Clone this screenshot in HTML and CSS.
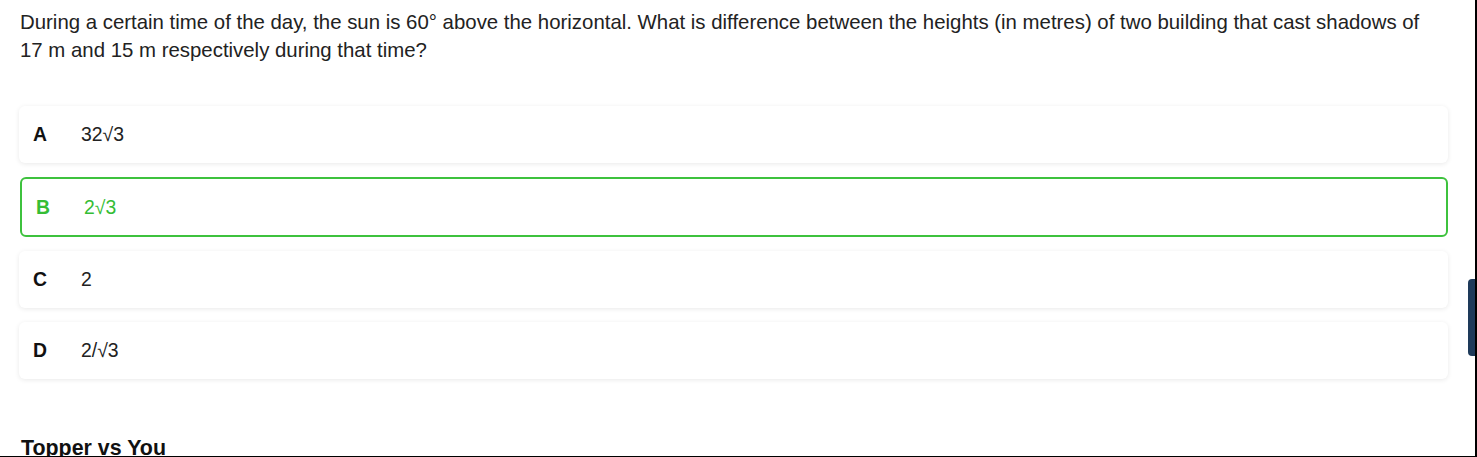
FILE: index.html
```html
<!DOCTYPE html>
<html lang="en">
<head>
    <meta charset="UTF-8">
    <meta name="viewport" content="width=device-width, initial-scale=1.0">
    <title>Question</title>
    <link rel="stylesheet" href="styles.css">
</head>
<body>
    <div class="page">
        <p class="question">During a certain time of the day, the sun is 60&deg; above the horizontal. What is difference between the heights (in metres) of two building that cast shadows of 17 m and 15 m respectively during that time?</p>

        <!-- Options -->
        <div class="options">
            <div class="option">
                <span class="letter">A</span>
                <span class="value">32&radic;3</span>
            </div>
            <div class="option correct">
                <span class="letter">B</span>
                <span class="value">2&radic;3</span>
            </div>
            <div class="option">
                <span class="letter">C</span>
                <span class="value">2</span>
            </div>
            <div class="option">
                <span class="letter">D</span>
                <span class="value">2/&radic;3</span>
            </div>
        </div>

        <h3 class="section-title">Topper vs You</h3>
    </div>

    <div class="side-tab"></div>
</body>
</html>
```

FILE: styles.css
```css
html, body {
    margin: 0;
    padding: 0;
    height: 100%;
    overflow: hidden;
}

body {
    font-family: 'Liberation Sans', Arial, sans-serif;
    color: #222;
    background-color: #ffffff;
}

.page {
    box-sizing: border-box;
    height: 457px;
    padding: 8px 27px 0 19px;
    border-right: 2px solid #000;
    border-bottom: 1px solid #000;
    overflow: hidden;
}

/* Question text */
.question {
    margin: 0 0 0 1px;
    font-size: 20.4px;
    line-height: 28px;
    padding-right: 10px;
}

/* Options */
.options {
    display: flex;
    flex-direction: column;
    gap: 14px;
    margin-top: 42px;
}

.option {
    display: flex;
    align-items: center;
    height: 57px;
    padding: 0 14px;
    border-radius: 6px;
    background-color: #fff;
    box-shadow: 0 1px 5px rgba(0, 0, 0, 0.09);
    font-size: 19.4px;
}

.option .letter {
    width: 48px;
    font-weight: bold;
    color: #111;
}

.option .value {
    color: #222;
}

.option.correct {
    height: 60px;
    box-sizing: border-box;
    margin: 0 0 0 1px;
    border: 2px solid #3ec23e;
    box-shadow: none;
}

.option.correct .letter,
.option.correct .value {
    color: #35bd35;
}

.section-title {
    margin: 57px 0 0 2px;
    font-size: 21.4px;
    font-weight: bold;
    color: #111;
}

/* Floating tab on the right edge */
.side-tab {
    position: fixed;
    right: 2px;
    top: 279px;
    width: 7px;
    height: 77px;
    background-color: #1e3a5a;
    border-radius: 4px 0 0 4px;
}
```
